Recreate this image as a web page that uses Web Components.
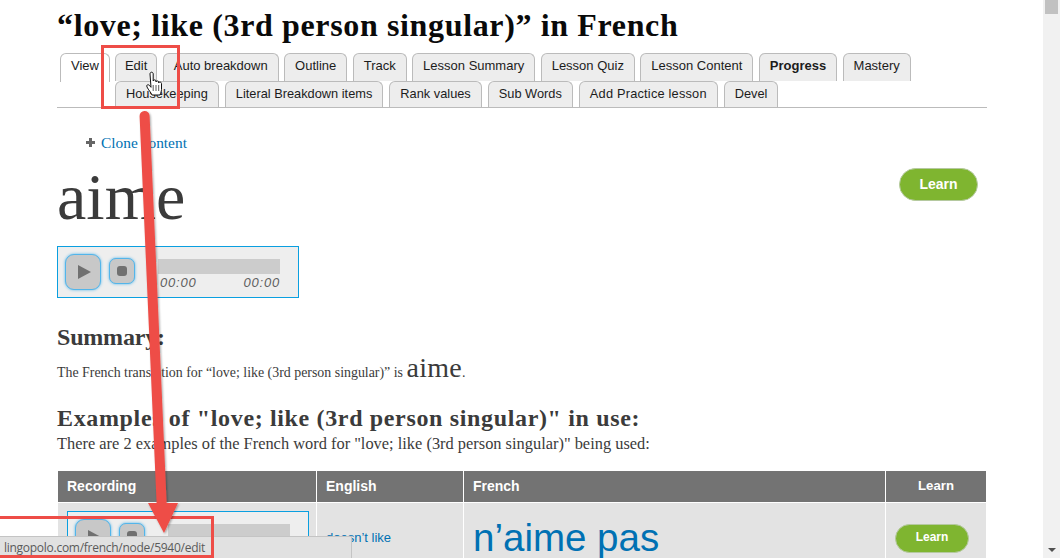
<!DOCTYPE html>
<html lang="en">
<head>
<meta charset="utf-8">
<title>aime</title>
<style>
  html, body { margin: 0; height: 100%; overflow: hidden; background: #fff; }
  lp-page { font-family: "Liberation Serif", serif; color: #3b3b3b; }
</style>
</head>
<body>
<lp-page>
  <h-title slot="title">“love; like (3rd person singular)” in French</h-title>
  <lp-tabs slot="tabs"></lp-tabs>
  <lp-content slot="content"></lp-content>
</lp-page>
<lp-annotations></lp-annotations>

<script>
class LpPage extends HTMLElement {
  constructor() {
    super();
    this.attachShadow({ mode: "open" }).innerHTML = `
    <style>
      :host { display: flex; width: 1060px; height: 558px; overflow: hidden; }
      .main { flex: 1; min-width: 0; padding-left: 57px; box-sizing: border-box; }
      .column { width: 930px; }
      .scrollbar { width: 17px; background: #f1f1f1; display: flex; flex-direction: column; align-items: center; position: relative; }
      .thumb { width: 13px; height: 14px; background: #c1c1c1; }
      .spacer { flex: 1; }
      .down { width: 0; height: 0; border-top: 4px solid #505050; border-left: 4px solid transparent; border-right: 4px solid transparent; margin-bottom: 6px; }
    </style>
    <div class="main"><div class="column">
      <slot name="title"></slot>
      <slot name="tabs"></slot>
      <slot name="content"></slot>
    </div></div>
    <div class="scrollbar"><div class="thumb"></div><div class="spacer"></div><div class="down"></div></div>`;
  }
}
customElements.define("lp-page", LpPage);

class HTitle extends HTMLElement {
  constructor() {
    super();
    this.attachShadow({ mode: "open" }).innerHTML = `
    <style>
      :host { display: block; height: 53px; padding-top: 7px; box-sizing: border-box;
        font: bold 32px/36px "Liberation Serif", serif; color: #0a0a0a; letter-spacing: .64px; white-space: nowrap; }
    </style><slot></slot>`;
  }
}
customElements.define("h-title", HTitle);

class LpTab extends HTMLElement {
  constructor() {
    super();
    this.attachShadow({ mode: "open" }).innerHTML = `
    <style>
      :host { display: block; height: 28px; box-sizing: border-box; padding: 4px 10px 0;
        background: #ededed; border: 1px solid #bbb; border-bottom: 0; border-radius: 6px 6px 0 0;
        font: 13px/16px "Liberation Sans", sans-serif; color: #1c1c1c; white-space: nowrap; }
      :host([active]) { background: #fff; height: 29px; padding-top: 4px; border-bottom: 0; }
      :host([strong]) { font-weight: bold; }
    </style><slot></slot>`;
  }
}
customElements.define("lp-tab", LpTab);

class LpTabs extends HTMLElement {
  constructor() {
    super();
    const row1 = ["Edit", "Auto breakdown", "Outline", "Track", "Lesson Summary", "Lesson Quiz", "Lesson Content", "Progress", "Mastery"];
    const row2 = ["Housekeeping", "Literal Breakdown items", "Rank values", "Sub Words", "Add Practice lesson", "Devel"];
    const tab = t => `<lp-tab ${t === "Progress" ? "strong" : ""}>${t}</lp-tab>`;
    this.attachShadow({ mode: "open" }).innerHTML = `
    <style>
      :host { display: flex; gap: 5px; height: 54px; padding-left: 3px; border-bottom: 1px solid #bbb; box-sizing: content-box; margin-bottom: 26px; align-items: flex-start; }
      .rows { display: flex; flex-direction: column; }
      .row { display: flex; gap: 5.4px; height: 28px; }
      .row lp-tab:first-child { padding-left: 9px; padding-right: 9px; }
      .row + .row { height: 26px; gap: 6px; overflow: hidden; }
      .row + .row lp-tab { font-size: 12.8px; }
      .row + .row lp-tab:first-child { padding-left: 10px; padding-right: 10px; }
      .row + .row lp-tab:nth-child(5) { letter-spacing: .2px; }
    </style>
    <lp-tab active>View</lp-tab>
    <div class="rows">
      <div class="row">${row1.map(tab).join("")}</div>
      <div class="row">${row2.map(tab).join("")}</div>
    </div>`;
  }
}
customElements.define("lp-tabs", LpTabs);

class LpPlayer extends HTMLElement {
  constructor() {
    super();
    this.attachShadow({ mode: "open" }).innerHTML = `
    <style>
      :host { display: flex; width: 242px; height: 52px; box-sizing: border-box; border: 1px solid #0a9fe0; background: #eee; padding: 7px 18px 0 7px; }
      button { padding: 0; background: #c8c8c8; border: 1px solid #53b5ea; box-shadow: 0 0 3px #53b5ea; display: flex; align-items: center; justify-content: center; flex: none; }
      .play { width: 36px; height: 36px; border-radius: 9px; }
      .stop { width: 26px; height: 26px; border-radius: 7px; margin: 4px 0 0 8px; }
      .play i { width: 0; height: 0; border-left: 13px solid #707070; border-top: 7px solid transparent; border-bottom: 7px solid transparent; margin-left: 3px; }
      .stop i { width: 10px; height: 10px; border-radius: 3px; background: #707070; }
      .track { flex: 1; margin-left: 23px; padding-top: 5px; }
      .bar { height: 15px; background: #ccc; }
      .time { display: flex; justify-content: space-between; padding-left: 2px; font: italic 13px/18px "Liberation Sans", sans-serif; color: #5e5e5e; letter-spacing: .8px; }
    </style>
    <button class="play" aria-label="Play"><i></i></button>
    <button class="stop" aria-label="Stop"><i></i></button>
    <div class="track"><div class="bar"></div><div class="time"><span>00:00</span><span>00:00</span></div></div>`;
  }
}
customElements.define("lp-player", LpPlayer);

class LpLearn extends HTMLElement {
  constructor() {
    super();
    this.attachShadow({ mode: "open" }).innerHTML = `
    <style>
      :host { display: inline-flex; align-items: center; justify-content: center; box-sizing: border-box; width: 79px; height: 33px; padding-bottom: 2px;
        border-radius: 17px; background: #7fb530; border: 1px solid #b5c9a0; color: #fff; font: bold 14px "Liberation Sans", sans-serif; }
      :host([small]) { width: 74px; height: 29px; font-size: 12px; }
    </style><slot></slot>`;
  }
}
customElements.define("lp-learn", LpLearn);

class LpTable extends HTMLElement {
  constructor() {
    super();
    this.attachShadow({ mode: "open" }).innerHTML = `
    <style>
      :host { display: block; margin-left: 1px; font-family: "Liberation Sans", sans-serif; }
      table { border-collapse: separate; border-spacing: 0; width: 928px; table-layout: fixed; }
      th { background: #737373; color: #fff; font-size: 14px; line-height: 16px; text-align: left; padding: 7px 9px 8px; height: 16px; border-left: 1px solid #fff; border-bottom: 1px solid #fff; }
      th:first-child, td:first-child { border-left: 0; padding-left: 9px; }
      th:last-child { text-align: center; font-size: 13.2px; }
      td { background: #e3e3e3; border-left: 1px solid #fff; padding: 8px 9px; height: 52px; vertical-align: middle; }
      a { color: #0071b3; text-decoration: none; }
      .en { font-size: 13px; }
      .fr { font-size: 38.5px; line-height: 40px; }
      .english { padding-bottom: 10px; }
      .player { padding-top: 8px; vertical-align: top; }
      .learn { padding-left: 9px; }
    </style>
    <table>
      <colgroup><col style="width:258px"><col style="width:147px"><col style="width:422px"><col style="width:101px"></colgroup>
      <tr><th>Recording</th><th>English</th><th>French</th><th>Learn</th></tr>
      <tr>
        <td class="player"><lp-player></lp-player></td>
        <td class="english"><a class="en" href="#">doesn’t like</a></td>
        <td><a class="fr" href="#">n’aime pas</a></td>
        <td class="learn"><lp-learn small>Learn</lp-learn></td>
      </tr>
    </table>`;
  }
}
customElements.define("lp-table", LpTable);

class LpContent extends HTMLElement {
  constructor() {
    super();
    this.attachShadow({ mode: "open" }).innerHTML = `
    <style>
      :host { display: block; font-family: "Liberation Serif", serif; color: #3b3b3b; }
      .clone { display: flex; align-items: center; gap: 6px; margin-left: 29px; height: 17px; font-size: 15.4px; }
      .clone a { color: #0071b3; text-decoration: none; }
      .clone svg { display: block; }
      .word { display: flex; justify-content: space-between; align-items: flex-start; height: 70px; margin-top: 8px; }
      h1 { margin: 2px 0 0; font: 400 66px/72px "Liberation Serif", serif; color: #3b3b3b; }
      .word lp-learn { margin: 9px 9px 0 0; }
      lp-player { margin-top: 17px; }
      h2 { margin: 0; font: bold 24px/26px "Liberation Serif", serif; letter-spacing: .65px; white-space: nowrap; }
      .sum { margin-top: 26px; letter-spacing: -.2px; }
      p { margin: 0; }
      .line { font-size: 13.900px; line-height: 28px; margin-top: 4px; white-space: nowrap; }
      .line b { font-weight: 400; font-size: 28px; letter-spacing: .3px; }
      .ex { margin-top: 18px; }
      .note { margin-top: 2px; font-size: 16.4px; line-height: 21px; white-space: nowrap; margin-bottom: 17px; }
    </style>
    <div class="clone">
      <svg width="9" height="9" viewBox="0 0 9 9"><path d="M3 0h3v3h3v3H6v3H3V6H0V3h3z" fill="#666"/></svg>
      <a href="#">Clone content</a>
    </div>
    <div class="word"><h1>aime</h1><lp-learn>Learn</lp-learn></div>
    <lp-player></lp-player>
    <h2 class="sum">Summary:</h2>
    <p class="line">The French translation for “love; like (3rd person singular)” is <b>aime</b>.</p>
    <h2 class="ex">Examples of "love; like (3rd person singular)" in use:</h2>
    <p class="note">There are 2 examples of the French word for "love; like (3rd person singular)" being used:</p>
    <lp-table></lp-table>`;
  }
}
customElements.define("lp-content", LpContent);

// screenshot markup sits on top of the page: boxes, arrow, status bubble, pointer
class LpAnnotations extends HTMLElement {
  constructor() {
    super();
    this.attachShadow({ mode: "open" }).innerHTML = `
    <style>
      :host { position: absolute; left: 0; top: 0; width: 1060px; height: 558px; overflow: hidden; pointer-events: none; }
      .status { position: absolute; left: 0; top: 536px; width: 352px; height: 22px; box-sizing: border-box; background: #e1e1e1; border-top: 1px solid #c4c4c4; border-right: 1px solid #c4c4c4;
        font: 12px/21px "Open Sans", sans-serif; letter-spacing: -.27px; color: #5a5a5a; padding-left: 4px; white-space: nowrap; }
      svg { position: absolute; left: 0; top: 0; }
    </style>
    <div class="status">lingopolo.com/french/node/5940/edit</div>
    <svg width="1060" height="558" viewBox="0 0 1060 558">
      <defs><filter id="s" x="-30%" y="-5%" width="160%" height="110%"><feDropShadow dx="1" dy="1" stdDeviation="1.2" flood-color="#000" flood-opacity=".35"/></filter></defs>
      <g fill="none" stroke="#ee4d47" stroke-width="3">
        <rect x="102.5" y="46.5" width="76" height="61"/>
        <rect x="-10" y="517.5" width="222.5" height="39"/>
      </g>
      <g filter="url(#s)">
        <path d="M144.6 116 L161.7 505" stroke="#ee4d47" stroke-width="10" stroke-linecap="round" fill="none"/>
        <path d="M148 503 L178 503 L164 533 Z" fill="#ee4d47"/>
      </g>
      <path d="M150 74c0-2.4 3.200-2.4 3.200 0v7c0-1.500 2.800-1.500 2.800 0v1c0-1.400 2.700-1.400 2.700 0v1c0-1.300 2.800-1.300 2.800.5v6c0 2-1 3.500-1.500 5.500h-8c-1-2.500-3.500-5-5-8-1-2 1-3 2.300-1.700l1.700 2z" fill="#fff" stroke="#111" stroke-width="1" stroke-linejoin="round"/>
      <path d="M153.200 85v6M156 85v6M158.700 85v6" stroke="#111" stroke-width=".7"/>
    </svg>`;
  }
}
customElements.define("lp-annotations", LpAnnotations);
</script>
</body>
</html>
